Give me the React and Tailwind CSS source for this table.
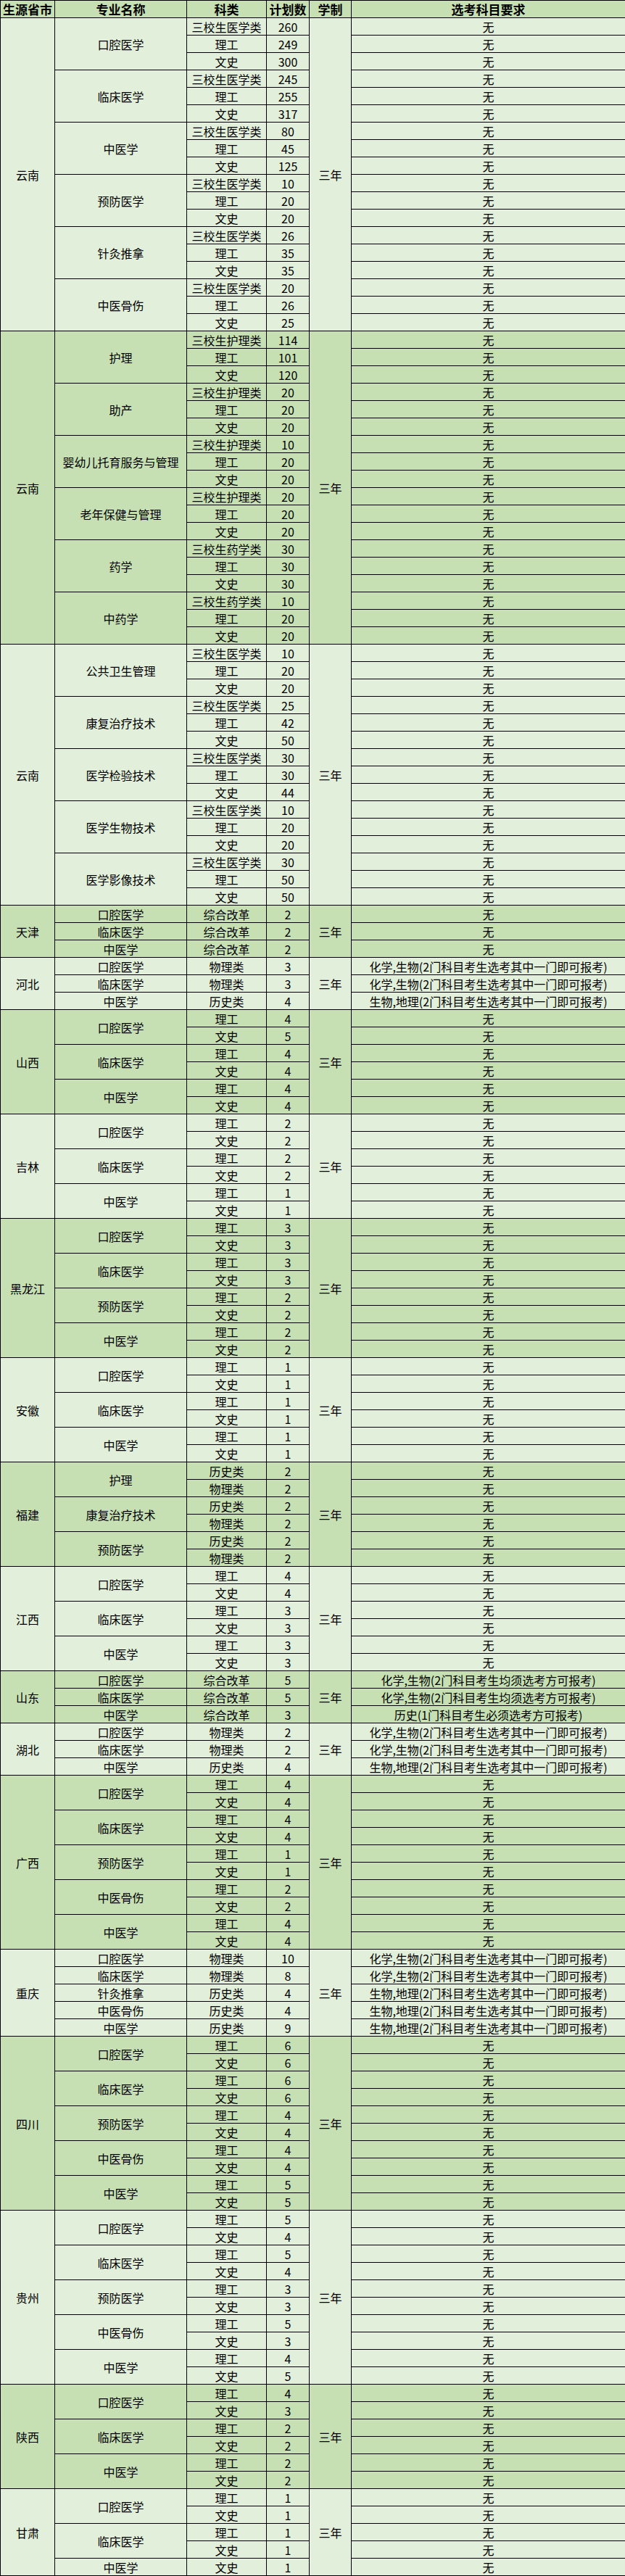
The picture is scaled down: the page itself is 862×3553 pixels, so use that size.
import React from 'react';

const A = '化学,生物(2门科目考生选考其中一门即可报考)';
const B = '生物,地理(2门科目考生选考其中一门即可报考)';
const C = '化学,生物(2门科目考生均须选考方可报考)';
const D = '历史(1门科目考生必须选考方可报考)';

// 三校生 + 理工 + 文史
const y3 = (k, a, b, c) => [[k, a], ['理工', b], ['文史', c]];
// 理工 + 文史
const lw = (a, b) => [['理工', a], ['文史', b]];

const groups = [
  {
    p: '云南',
    majors: [
      ['口腔医学', y3('三校生医学类', 260, 249, 300)],
      ['临床医学', y3('三校生医学类', 245, 255, 317)],
      ['中医学', y3('三校生医学类', 80, 45, 125)],
      ['预防医学', y3('三校生医学类', 10, 20, 20)],
      ['针灸推拿', y3('三校生医学类', 26, 35, 35)],
      ['中医骨伤', y3('三校生医学类', 20, 26, 25)],
    ],
  },
  {
    p: '云南',
    majors: [
      ['护理', y3('三校生护理类', 114, 101, 120)],
      ['助产', y3('三校生护理类', 20, 20, 20)],
      ['婴幼儿托育服务与管理', y3('三校生护理类', 10, 20, 20)],
      ['老年保健与管理', y3('三校生护理类', 20, 20, 20)],
      ['药学', y3('三校生药学类', 30, 30, 30)],
      ['中药学', y3('三校生药学类', 10, 20, 20)],
    ],
  },
  {
    p: '云南',
    majors: [
      ['公共卫生管理', y3('三校生医学类', 10, 20, 20)],
      ['康复治疗技术', y3('三校生医学类', 25, 42, 50)],
      ['医学检验技术', y3('三校生医学类', 30, 30, 44)],
      ['医学生物技术', y3('三校生医学类', 10, 20, 20)],
      ['医学影像技术', y3('三校生医学类', 30, 50, 50)],
    ],
  },
  {
    p: '天津',
    majors: [
      ['口腔医学', [['综合改革', 2]]],
      ['临床医学', [['综合改革', 2]]],
      ['中医学', [['综合改革', 2]]],
    ],
  },
  {
    p: '河北',
    majors: [
      ['口腔医学', [['物理类', 3, A]]],
      ['临床医学', [['物理类', 3, A]]],
      ['中医学', [['历史类', 4, B]]],
    ],
  },
  {
    p: '山西',
    majors: [
      ['口腔医学', lw(4, 5)],
      ['临床医学', lw(4, 4)],
      ['中医学', lw(4, 4)],
    ],
  },
  {
    p: '吉林',
    majors: [
      ['口腔医学', lw(2, 2)],
      ['临床医学', lw(2, 2)],
      ['中医学', lw(1, 1)],
    ],
  },
  {
    p: '黑龙江',
    majors: [
      ['口腔医学', lw(3, 3)],
      ['临床医学', lw(3, 3)],
      ['预防医学', lw(2, 2)],
      ['中医学', lw(2, 2)],
    ],
  },
  {
    p: '安徽',
    majors: [
      ['口腔医学', lw(1, 1)],
      ['临床医学', lw(1, 1)],
      ['中医学', lw(1, 1)],
    ],
  },
  {
    p: '福建',
    majors: [
      ['护理', [['历史类', 2], ['物理类', 2]]],
      ['康复治疗技术', [['历史类', 2], ['物理类', 2]]],
      ['预防医学', [['历史类', 2], ['物理类', 2]]],
    ],
  },
  {
    p: '江西',
    majors: [
      ['口腔医学', lw(4, 4)],
      ['临床医学', lw(3, 3)],
      ['中医学', lw(3, 3)],
    ],
  },
  {
    p: '山东',
    majors: [
      ['口腔医学', [['综合改革', 5, C]]],
      ['临床医学', [['综合改革', 5, C]]],
      ['中医学', [['综合改革', 3, D]]],
    ],
  },
  {
    p: '湖北',
    majors: [
      ['口腔医学', [['物理类', 2, A]]],
      ['临床医学', [['物理类', 2, A]]],
      ['中医学', [['历史类', 4, B]]],
    ],
  },
  {
    p: '广西',
    majors: [
      ['口腔医学', lw(4, 4)],
      ['临床医学', lw(4, 4)],
      ['预防医学', lw(1, 1)],
      ['中医骨伤', lw(2, 2)],
      ['中医学', lw(4, 4)],
    ],
  },
  {
    p: '重庆',
    majors: [
      ['口腔医学', [['物理类', 10, A]]],
      ['临床医学', [['物理类', 8, A]]],
      ['针灸推拿', [['历史类', 4, B]]],
      ['中医骨伤', [['历史类', 4, B]]],
      ['中医学', [['历史类', 9, B]]],
    ],
  },
  {
    p: '四川',
    majors: [
      ['口腔医学', lw(6, 6)],
      ['临床医学', lw(6, 6)],
      ['预防医学', lw(4, 4)],
      ['中医骨伤', lw(4, 4)],
      ['中医学', lw(5, 5)],
    ],
  },
  {
    p: '贵州',
    majors: [
      ['口腔医学', lw(5, 4)],
      ['临床医学', lw(5, 4)],
      ['预防医学', lw(3, 3)],
      ['中医骨伤', lw(5, 3)],
      ['中医学', lw(4, 5)],
    ],
  },
  {
    p: '陕西',
    majors: [
      ['口腔医学', lw(4, 3)],
      ['临床医学', lw(2, 2)],
      ['中医学', lw(2, 2)],
    ],
  },
  {
    p: '甘肃',
    majors: [
      ['口腔医学', lw(1, 1)],
      ['临床医学', lw(1, 1)],
      ['中医学', [['文史', 1]]],
    ],
  },
];

const cell = 'border border-black p-0 text-center align-middle whitespace-nowrap';

export default function App() {
  const body = [];
  groups.forEach((g, gi) => {
    const bg = gi % 2 === 1 ? 'bg-[#c6e0b4]' : 'bg-[#e2efda]';
    const total = g.majors.reduce((s, m) => s + m[1].length, 0);
    let first = true;
    g.majors.forEach(([name, rows], mi) => {
      rows.forEach(([kind, num, req], ri) => {
        body.push(
          <tr key={`${gi}-${mi}-${ri}`} className={`h-[24px] ${bg}`}>
            {first && (
              <td rowSpan={total} className={cell}>
                {g.p}
              </td>
            )}
            {ri === 0 && (
              <td rowSpan={rows.length} className={cell}>
                {name}
              </td>
            )}
            <td className={cell}>{kind}</td>
            <td className={cell}>{num}</td>
            {first && (
              <td rowSpan={total} className={cell}>
                三年
              </td>
            )}
            <td className={cell}>{req || '无'}</td>
          </tr>
        );
        first = false;
      });
    });
  });

  return (
    <div className="w-[862px] bg-white text-black font-['Noto_Sans_CJK_SC','Noto_Sans',sans-serif] text-[16px] leading-none">
      <table className="w-[862px] table-fixed border-collapse">
        <colgroup>
          <col className="w-[75px]" />
          <col className="w-[182px]" />
          <col className="w-[110px]" />
          <col className="w-[59px]" />
          <col className="w-[58px]" />
          <col className="w-[378px]" />
        </colgroup>
        <thead>
          <tr className="h-[24px] bg-[#c6e0b4] text-[17px] font-bold">
            <th className={cell}>生源省市</th>
            <th className={cell}>专业名称</th>
            <th className={cell}>科类</th>
            <th className={cell}>计划数</th>
            <th className={cell}>学制</th>
            <th className={cell}>选考科目要求</th>
          </tr>
        </thead>
        <tbody>{body}</tbody>
      </table>
    </div>
  );
}
